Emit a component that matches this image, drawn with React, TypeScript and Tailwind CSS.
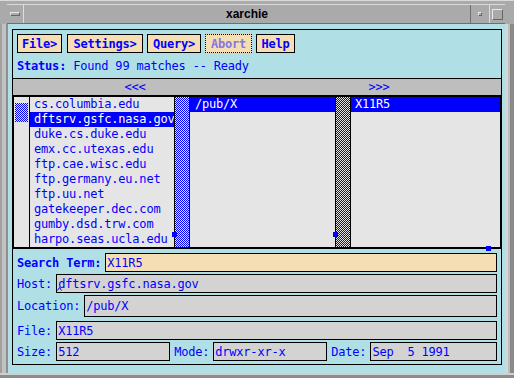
import React from "react";

const mono = "font-['DejaVu_Sans_Mono',monospace] text-[12px] tracking-[-0.2px]";

const hosts = [
  "cs.columbia.edu",
  "dftsrv.gsfc.nasa.gov",
  "duke.cs.duke.edu",
  "emx.cc.utexas.edu",
  "ftp.cae.wisc.edu",
  "ftp.germany.eu.net",
  "ftp.uu.net",
  "gatekeeper.dec.com",
  "gumby.dsd.trw.com",
  "harpo.seas.ucla.edu",
];

// 1px stipple used for the scrollbar thumbs
const Checker = ({ id }: { id: string }) => (
  <svg width="100%" height="100%" className="block" shapeRendering="crispEdges">
    <defs>
      <pattern id={id} width="2" height="2" patternUnits="userSpaceOnUse">
        <rect width="2" height="2" fill="#e5e5e5" />
        <rect x="0" y="0" width="1" height="1" fill="#0000ff" />
        <rect x="1" y="1" width="1" height="1" fill="#0000ff" />
      </pattern>
    </defs>
    <rect width="100%" height="100%" fill={`url(#${id})`} />
  </svg>
);

const Btn = ({ label, w, ml, dim }: { label: string; w: string; ml: string; dim?: boolean }) => (
  <div
    className={`${w} ${ml} h-[19px] bg-[#f5deb3] flex items-center justify-center font-bold leading-[14px] ${
      dim ? "border border-dotted border-black text-[#8478dc]" : "border border-black text-[#0000ff]"
    }`}
  >
    {label}
  </div>
);

const Field = ({ value, h = "h-[19px]", w = "flex-1", bg = "bg-[#d3d3d3]", caret }: { value: string; h?: string; w?: string; bg?: string; caret?: boolean }) => (
  <div className={`${w} ${h} ${bg} border border-black flex items-center pl-[1px] leading-[14px] relative`}>
    {value}
    {caret && (
      <svg className="absolute left-[0px] bottom-[1px]" width="5" height="4" viewBox="0 0 5 4">
        <path d="M0.5 3.5 L2.5 0.5 L4.5 3.5" stroke="#0000ff" strokeWidth="1" fill="none" />
      </svg>
    )}
  </div>
);

export default function App() {
  return (
    <div className={`w-[514px] h-[378px] bg-[#aaaaaa] flex flex-col overflow-hidden text-[#0000ff] ${mono}`}>
      {/* window title bar */}
      <div className="flex h-[24px] shrink-0 border-t border-[#d9d9d9]">
        <div className="w-[7px]" />
        <div className="flex-1 flex flex-col">
          <div className="h-[5px]" />
          <div className="flex-1 flex border-t border-[#d9d9d9] border-b border-b-[#6e6e6e]">
            <div className="w-[17px] flex items-center justify-center border-r border-[#dcdcdc]">
              <div className="w-[10px] h-[4px] border border-[#e8e8e8] border-b-[#666666] border-r-[#666666]" />
            </div>
            <div className="flex-1 flex items-center justify-center font-['Liberation_Sans',sans-serif] font-bold text-[12px] tracking-normal text-black">
              xarchie
            </div>
            <div className="w-[19px] flex items-center justify-center border-l border-[#6e6e6e]">
              <div className="w-[4px] h-[4px] border border-[#e8e8e8] border-b-[#666666] border-r-[#666666]" />
            </div>
            <div className="w-[16px] flex items-center justify-center border-l border-[#dcdcdc]">
              <div className="w-[11px] h-[11px] border border-[#e8e8e8] border-b-[#666666] border-r-[#666666]" />
            </div>
          </div>
        </div>
        <div className="w-[9px]" />
      </div>

      <div className="flex h-[349px] shrink-0">
        <div className="w-[8px] border-l-2 border-[#a0a0a0] bg-[#c2c2c2] border-r-2 border-r-[#8f8f8f]" />

        {/* client area */}
        <div className="w-[497px] h-[349px] bg-[#b0e0e6] pl-[4px] pt-[5px] pr-[3px] pb-[8px]">
          <div className="h-full border border-black flex flex-col relative">
            {/* menu buttons */}
            <div className="flex pt-[4px] pl-[4px]">
              <Btn label="File>" w="w-[45px]" ml="ml-0" />
              <Btn label="Settings>" w="w-[76px]" ml="ml-[5px]" />
              <Btn label="Query>" w="w-[54px]" ml="ml-[4px]" />
              <Btn label="Abort" w="w-[47px]" ml="ml-[4px]" dim />
              <Btn label="Help" w="w-[39px]" ml="ml-[4px]" />
            </div>

            <div className="mt-[6px] h-[14px] leading-[14px] pl-[4px] whitespace-pre">
              <span className="font-bold">Status:</span> Found 99 matches -- Ready
            </div>

            {/* browse arrows */}
            <div className="mt-[5px] h-[17px] border-t border-black bg-[#bebebe] flex leading-[14px]">
              <div className="flex-1 flex items-center justify-center">&lt;&lt;&lt;</div>
              <div className="flex-1 flex items-center justify-center">&gt;&gt;&gt;</div>
            </div>

            {/* browser panes */}
            <div className="h-[154px] border-y-2 border-x border-black flex bg-[#e5e5e5] leading-[15px]">
              <div className="w-[16px] border-r border-black pt-[6px] pl-[1px]">
                <div className="w-[13px] h-[19px]">
                  <Checker id="thumb0" />
                </div>
              </div>
              <div className="w-[145px] border-r border-black">
                {hosts.map((h, i) => (
                  <div key={h} className={`h-[15px] pl-[4px] whitespace-nowrap overflow-hidden ${i === 1 ? "bg-[#0000ff] text-white" : ""}`}>
                    {h}
                  </div>
                ))}
              </div>
              <div className="w-[15px] border-r border-black">
                <Checker id="thumb1" />
              </div>
              <div className="w-[146px] border-r border-black">
                <div className="h-[15px] pl-[5px] bg-[#0000ff] text-white">/pub/X</div>
              </div>
              <div className="w-[15px] border-r border-black">
                <Checker id="thumb2" />
              </div>
              <div className="flex-1">
                <div className="h-[15px] pl-[4px] bg-[#0000ff] text-white">X11R5</div>
              </div>
            </div>

            {/* details form */}
            <div className="flex flex-col pl-[4px] pr-[4px] pt-[4px] leading-[14px]">
              <div className="flex items-center gap-[4px]">
                <span className="font-bold">Search Term:</span>
                <Field value="X11R5" bg="bg-[#f5deb3]" />
              </div>
              <div className="flex items-center gap-[4px] mt-[2px]">
                <span>Host:</span>
                <Field value="dftsrv.gsfc.nasa.gov" caret />
              </div>
              <div className="flex items-center gap-[4px] mt-[2px]">
                <span>Location:</span>
                <Field value="/pub/X" h="h-[22px]" />
              </div>
              <div className="flex items-center gap-[4px] mt-[4px]">
                <span>File:</span>
                <Field value="X11R5" />
              </div>
              <div className="flex items-center gap-[4px] mt-[2px] whitespace-pre">
                <span>Size:</span>
                <Field value="512" w="w-[114px]" />
                <span>Mode:</span>
                <Field value="drwxr-xr-x" w="w-[114px]" />
                <span>Date:</span>
                <Field value="Sep  5 1991" />
              </div>
            </div>

            {/* pane grips */}
            <div className="absolute left-[159px] top-[202px] w-[5px] h-[5px] bg-[#0000ff]" />
            <div className="absolute left-[320px] top-[202px] w-[5px] h-[5px] bg-[#0000ff]" />
            <div className="absolute left-[473px] top-[216px] w-[5px] h-[5px] bg-[#0000ff]" />
          </div>
        </div>

        <div className="w-[9px] border-l-[3px] border-[#d6d6d6] bg-[#bdbdbd] border-r-4 border-r-[#8a8a8a]" />
      </div>

      <div className="h-[5px] border-t-2 border-[#d0d0d0] bg-[#8c8c8c]" />
    </div>
  );
}
